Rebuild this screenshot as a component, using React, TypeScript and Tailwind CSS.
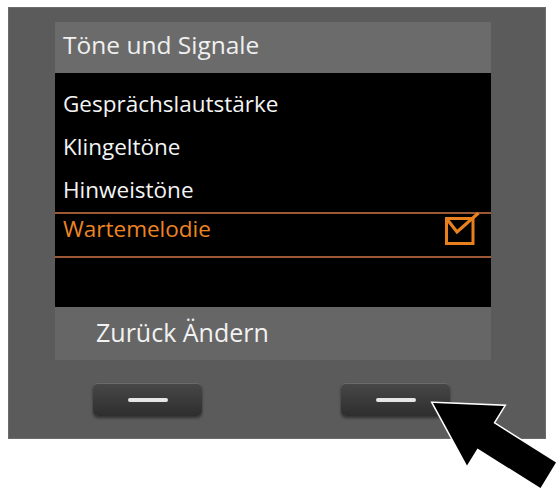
const menuItems = ['Gesprächslautstärke', 'Klingeltöne', 'Hinweistöne']

function SoftKey() {
  return (
    <div className="flex h-[33px] w-[109px] items-center justify-center rounded-[5px] border-t border-[#6a6a6a] bg-gradient-to-b from-[#474747] to-[#2e2e2e] shadow-[0_2px_3px_rgba(0,0,0,0.45)]">
      <div className="h-[4px] w-[40px] rounded-full bg-[#e6e6e6]" />
    </div>
  )
}

function CheckBox() {
  return (
    <svg width="36" height="34" viewBox="0 0 36 34" className="-mt-[3px] mr-[11px] overflow-visible">
      <rect x="2.5" y="7.5" width="26.5" height="25" fill="none" stroke="#e8801e" strokeWidth="3" />
      <polyline points="2.5,7.5 13,21 34.5,2" fill="none" stroke="#e8801e" strokeWidth="3.2" strokeLinejoin="miter" />
    </svg>
  )
}

function Arrow() {
  return (
    <svg width="560" height="495" viewBox="0 0 560 495" className="pointer-events-none absolute left-0 top-0">
      <polygon
        points="433,403 504,406 493.5,423 556,462.5 540.5,488 477.5,448.5 467,465.5"
        fill="#000"
        stroke="#fff"
        strokeWidth="3"
        strokeLinejoin="miter"
        paintOrder="stroke"
      />
    </svg>
  )
}

export default function App() {
  return (
    <div className="relative h-[495px] w-[560px] overflow-hidden bg-white font-['Open_Sans',sans-serif]">
      <div className="ml-[8px] mt-[7px] flex h-[432px] w-[538px] flex-col border border-[#6c6c6c] bg-[#5b5b5b]">
        {/* display */}
        <div className="ml-[46px] mt-[14px] flex w-[436px] flex-col">
          <div className="h-[51px] bg-[#6b6b6b] pl-[8px] pt-[7px] text-[24.5px] leading-[32px] text-[#f0f0f0]">
            Töne und Signale
          </div>

          <div className="flex h-[234px] flex-col bg-black pt-[10px]">
            {menuItems.map((item) => (
              <div key={item} className="h-[43px] pl-[8px] text-[22.5px] leading-[42px] text-[#f4f4f4]">
                {item}
              </div>
            ))}
            <div className="flex h-[46px] items-start justify-between border-y-2 border-[#9d5836] pl-[8px] text-[22.5px] leading-[30px] text-[#ec8424]">
              <span>Wartemelodie</span>
              <CheckBox />
            </div>
          </div>

          <div className="h-[53px] bg-[#666666] pl-[41px] pt-[9px] text-[25px] leading-[32px] text-[#f2f2f2]">
            Zurück Ändern
          </div>
        </div>

        {/* soft keys */}
        <div className="mt-[23px] flex pl-[84px]">
          <SoftKey />
          <div className="ml-[139px]">
            <SoftKey />
          </div>
        </div>
      </div>
      <Arrow />
    </div>
  )
}
